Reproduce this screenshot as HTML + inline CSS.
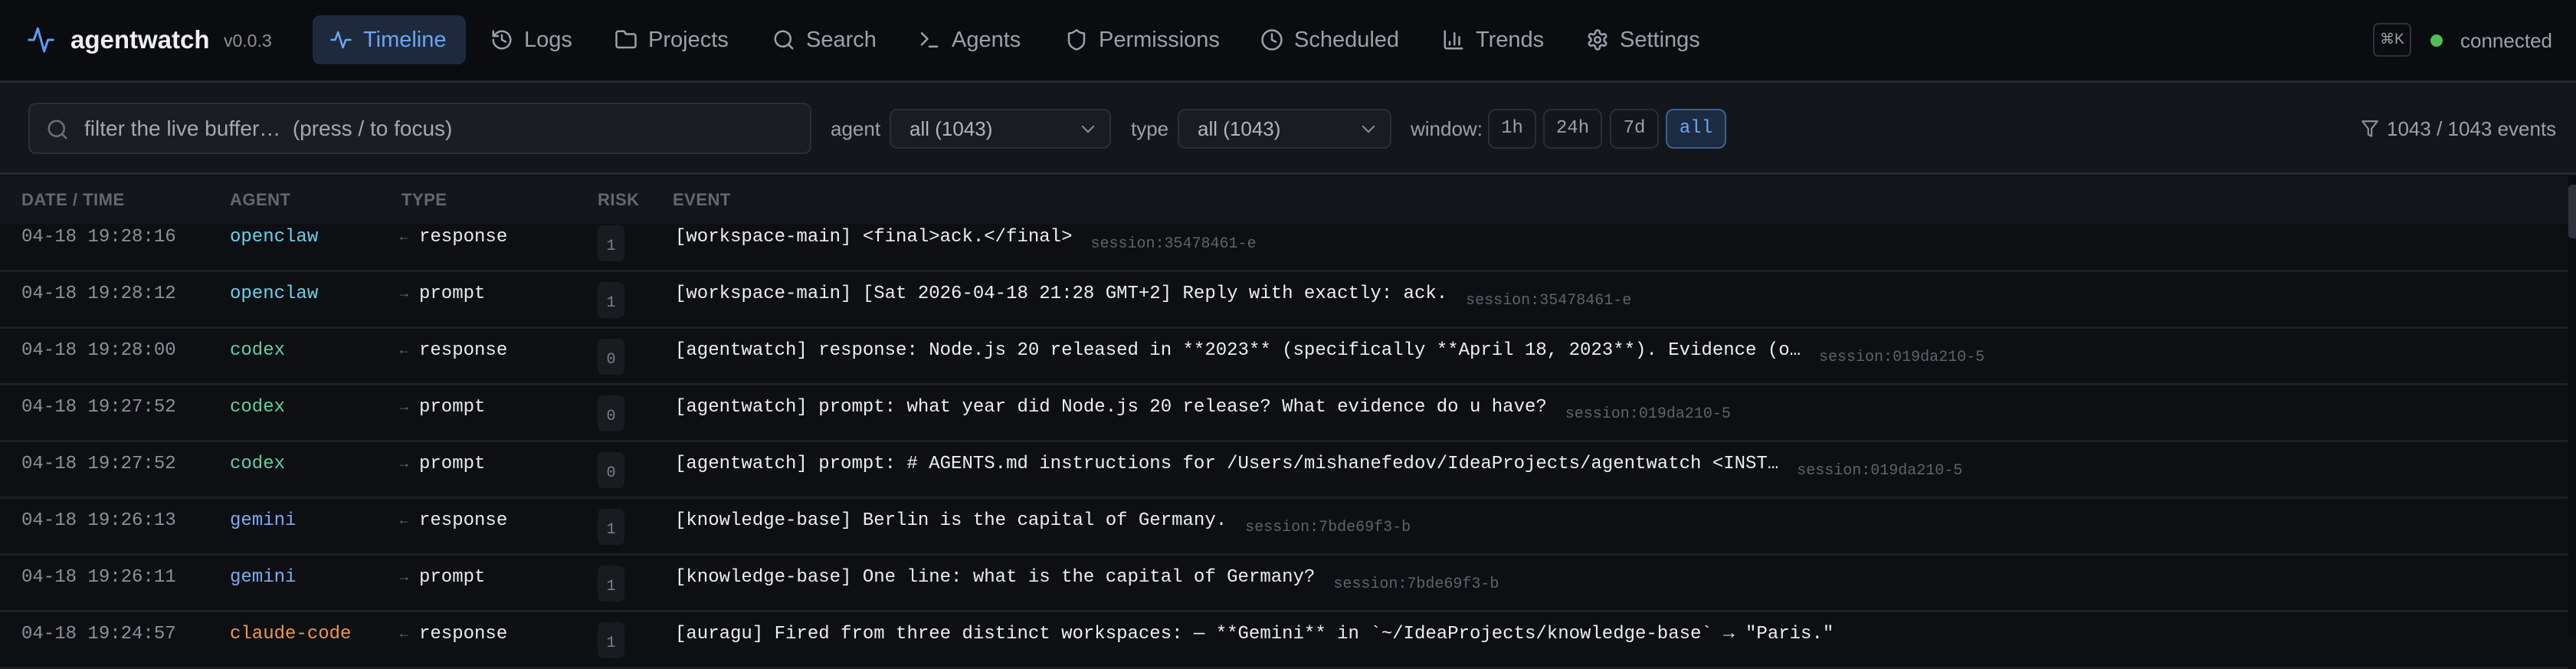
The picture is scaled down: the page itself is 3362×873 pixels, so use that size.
<!DOCTYPE html>
<html><head><meta charset="utf-8">
<style>
*{margin:0;padding:0;box-sizing:border-box}
html,body{width:3362px;height:828px;overflow:hidden;background:#0d0f12;font-family:"Liberation Sans",sans-serif}
.abs{position:absolute}
#nav{position:absolute;left:0;top:0;width:3362px;height:108px;background:#0b0c0f;border-bottom:3px solid #262a31}
.ni{position:absolute;top:20px;height:64px;display:flex;align-items:center;color:#9aa1ac;font-size:29px;white-space:nowrap}
.ni svg{width:30px;height:30px;margin-right:14px;fill:none;stroke:currentColor;stroke-width:2;stroke-linecap:round;stroke-linejoin:round}
#filt{position:absolute;left:0;top:108px;width:3362px;height:120px;background:#13161b;border-bottom:3px solid #262a31}
.sel{position:absolute;top:34px;height:52px;border:2px solid #2a2e36;border-radius:10px;background:#191c22;color:#b0b6c0;font-size:26px;line-height:48px;padding-left:24px}
.sel:after{content:"";position:absolute;right:22px;top:15px;width:10px;height:10px;border-right:2px solid #8a909a;border-bottom:2px solid #8a909a;transform:rotate(45deg)}
.lbl{position:absolute;top:34px;line-height:52px;color:#9aa1ac;font-size:26px}
.wb{position:absolute;top:34px;height:52px;border:2px solid #2a2e36;border-radius:10px;color:#9aa1ac;font-family:"Liberation Mono",monospace;font-size:24px;line-height:48px;text-align:center}
#th{position:absolute;left:0;top:230px;width:3352px;height:62px;background:#13161b;z-index:2}
#th div{position:absolute;top:0;line-height:62px;color:#626873;font-weight:bold;font-size:22px;letter-spacing:.5px}
.row{position:absolute;left:0;width:3352px;height:74px;border-bottom:3px solid #1c1f25;font-family:"Liberation Mono",monospace;font-size:24px;white-space:nowrap}
.row div{position:absolute;top:14px;line-height:30px}
.t{left:28px;color:#8b919b}
.a{left:300px}
.ar{left:522px;color:#6b717b;font-size:18px}
.ty{left:547px;color:#e8eaee}
.rk{left:780px;top:13px!important;width:35px;height:47px;background:#181b20;border-radius:7px;color:#7b818b;font-size:20px;text-align:center;line-height:56px!important}
.ev{left:881px;color:#eceef1}
.ev span{color:#5d636c;font-size:20px;margin-left:24px;position:relative;top:8px}
.oc{color:#67d3ea}.cx{color:#5fd1a0}.gm{color:#7ea9f4}.cc{color:#f0944c}
</style></head><body>
<div id="nav">
  <svg class="abs" style="left:36px;top:32px" width="40" height="40" viewBox="0 0 24 24" fill="none" stroke="#5b9cf2" stroke-width="1.8" stroke-linecap="round" stroke-linejoin="round"><path d="M1 12h4l3-9 5 18 3-9h4"/></svg>
  <div class="abs" style="left:92px;top:30px;font-size:33px;font-weight:bold;color:#eef0f4;line-height:44px">agentwatch</div>
  <div class="abs" style="left:292px;top:36px;font-size:23px;color:#8b919b;line-height:34px">v0.0.3</div>
  <div class="abs" style="left:408px;top:20px;width:200px;height:64px;background:#1e2a3c;border-radius:10px"></div>
  <div class="ni" style="left:430px;color:#6aa5f5"><svg viewBox="0 0 24 24"><path d="M2 12h4l3-8 5 16 3-8h5"/></svg>Timeline</div>
  <div class="ni" style="left:640px"><svg viewBox="0 0 24 24"><path d="M3 12a9 9 0 1 0 3-6.7L3 8"/><path d="M3 3v5h5"/><path d="M12 7v5l4 2"/></svg>Logs</div>
  <div class="ni" style="left:802px"><svg viewBox="0 0 24 24"><path d="M20 20a2 2 0 0 0 2-2V8a2 2 0 0 0-2-2h-8l-2-3H4a2 2 0 0 0-2 2v13a2 2 0 0 0 2 2z"/></svg>Projects</div>
  <div class="ni" style="left:1008px"><svg viewBox="0 0 24 24"><circle cx="11" cy="11" r="8"/><path d="m21 21-4.3-4.3"/></svg>Search</div>
  <div class="ni" style="left:1198px"><svg viewBox="0 0 24 24"><path d="m4 17 6-6-6-6"/><path d="M12 19h8"/></svg>Agents</div>
  <div class="ni" style="left:1390px"><svg viewBox="0 0 24 24"><path d="M20 13c0 5-3.5 7.5-7.7 9a1 1 0 0 1-.6 0C7.5 20.5 4 18 4 13V6a1 1 0 0 1 1-1c2 0 4.5-1.2 6.2-2.7a1.2 1.2 0 0 1 1.6 0C14.5 3.8 17 5 19 5a1 1 0 0 1 1 1z"/></svg>Permissions</div>
  <div class="ni" style="left:1645px"><svg viewBox="0 0 24 24"><circle cx="12" cy="12" r="10"/><path d="M12 6v6l4 2"/></svg>Scheduled</div>
  <div class="ni" style="left:1882px"><svg viewBox="0 0 24 24"><path d="M3 3v16a2 2 0 0 0 2 2h16"/><path d="M18 17V9M13 17V5M8 17v-3"/></svg>Trends</div>
  <div class="ni" style="left:2070px"><svg viewBox="0 0 24 24"><path d="M12.2 2h-.4a2 2 0 0 0-2 2v.2a2 2 0 0 1-1 1.7l-.4.3a2 2 0 0 1-2 0l-.2-.1a2 2 0 0 0-2.7.7l-.2.4a2 2 0 0 0 .7 2.7l.2.1a2 2 0 0 1 1 1.7v.5a2 2 0 0 1-1 1.8l-.2.1a2 2 0 0 0-.7 2.7l.2.4a2 2 0 0 0 2.7.7l.2-.1a2 2 0 0 1 2 0l.4.3a2 2 0 0 1 1 1.7v.2a2 2 0 0 0 2 2h.4a2 2 0 0 0 2-2v-.2a2 2 0 0 1 1-1.7l.4-.3a2 2 0 0 1 2 0l.2.1a2 2 0 0 0 2.7-.7l.2-.4a2 2 0 0 0-.7-2.7l-.2-.1a2 2 0 0 1-1-1.8v-.5a2 2 0 0 1 1-1.7l.2-.1a2 2 0 0 0 .7-2.7l-.2-.4a2 2 0 0 0-2.7-.7l-.2.1a2 2 0 0 1-2 0l-.4-.3a2 2 0 0 1-1-1.7V4a2 2 0 0 0-2-2z"/><circle cx="12" cy="12" r="3"/></svg>Settings</div>
  <div class="abs" style="left:3097px;top:30px;width:50px;height:44px;border:2px solid #2e323a;border-radius:7px;color:#9aa1ac;font-size:19px;text-align:center;line-height:40px">⌘K</div>
  <div class="abs" style="left:3172px;top:45px;width:16px;height:16px;border-radius:50%;background:#4fbf55"></div>
  <div class="abs" style="left:3211px;top:34px;font-size:26px;color:#9aa1ac;line-height:38px">connected</div>
</div>
<div id="filt">
  <div class="abs" style="left:37px;top:26px;width:1022px;height:67px;border:2px solid #2a2e36;border-radius:10px;background:#1a1d23"></div>
  <svg class="abs" style="left:60px;top:46px" width="30" height="30" viewBox="0 0 24 24" fill="none" stroke="#6b717b" stroke-width="2" stroke-linecap="round"><circle cx="11" cy="11" r="8"/><path d="m21 21-4.3-4.3"/></svg>
  <div class="abs" style="left:110px;top:40px;font-size:28px;color:#a3a9b3;line-height:40px">filter the live buffer…&nbsp; (press / to focus)</div>
  <div class="lbl" style="left:1084px">agent</div>
  <div class="sel" style="left:1161px;width:289px">all (1043)</div>
  <div class="lbl" style="left:1476px">type</div>
  <div class="sel" style="left:1537px;width:279px">all (1043)</div>
  <div class="lbl" style="left:1841px">window:</div>
  <div class="wb" style="left:1942px;width:63px">1h</div>
  <div class="wb" style="left:2014px;width:77px">24h</div>
  <div class="wb" style="left:2101px;width:64px">7d</div>
  <div class="wb" style="left:2174px;width:79px;background:#1d2b42;border-color:#3d5f92;color:#6aa8f7">all</div>
  <svg class="abs" style="left:3080px;top:46px" width="26" height="28" viewBox="0 0 24 24" fill="none" stroke="#8b919b" stroke-width="2" stroke-linejoin="round"><path d="M3 3h18l-7 9v9l-4-2v-7z"/></svg>
  <div class="abs" style="left:3115px;top:40px;font-size:26px;color:#9aa1ac;line-height:40px">1043 / 1043 events</div>
</div>
<div id="th">
  <div style="left:28px">DATE / TIME</div><div style="left:300px">AGENT</div><div style="left:524px">TYPE</div><div style="left:780px">RISK</div><div style="left:878px">EVENT</div>
</div>
<div class="abs" style="left:3352px;top:230px;width:10px;height:598px;background:#0b0c0f"></div>
<div class="abs" style="left:3352px;top:241px;width:10px;height:70px;background:#2e323a;border-radius:5px 0 0 5px"></div>

<div class="row" style="top:281px"><div class="t">04-18 19:28:16</div><div class="a oc">openclaw</div><div class="ar">←</div><div class="ty">response</div><div class="rk">1</div><div class="ev">[workspace-main] &lt;final&gt;ack.&lt;/final&gt;<span>session:35478461-e</span></div></div>
<div class="row" style="top:355px"><div class="t">04-18 19:28:12</div><div class="a oc">openclaw</div><div class="ar">→</div><div class="ty">prompt</div><div class="rk">1</div><div class="ev">[workspace-main] [Sat 2026-04-18 21:28 GMT+2] Reply with exactly: ack.<span>session:35478461-e</span></div></div>
<div class="row" style="top:429px"><div class="t">04-18 19:28:00</div><div class="a cx">codex</div><div class="ar">←</div><div class="ty">response</div><div class="rk">0</div><div class="ev">[agentwatch] response: Node.js 20 released in **2023** (specifically **April 18, 2023**). Evidence (o…<span>session:019da210-5</span></div></div>
<div class="row" style="top:503px"><div class="t">04-18 19:27:52</div><div class="a cx">codex</div><div class="ar">→</div><div class="ty">prompt</div><div class="rk">0</div><div class="ev">[agentwatch] prompt: what year did Node.js 20 release? What evidence do u have?<span>session:019da210-5</span></div></div>
<div class="row" style="top:577px"><div class="t">04-18 19:27:52</div><div class="a cx">codex</div><div class="ar">→</div><div class="ty">prompt</div><div class="rk">0</div><div class="ev">[agentwatch] prompt: # AGENTS.md instructions for /Users/mishanefedov/IdeaProjects/agentwatch &lt;INST…<span>session:019da210-5</span></div></div>
<div class="row" style="top:651px"><div class="t">04-18 19:26:13</div><div class="a gm">gemini</div><div class="ar">←</div><div class="ty">response</div><div class="rk">1</div><div class="ev">[knowledge-base] Berlin is the capital of Germany.<span>session:7bde69f3-b</span></div></div>
<div class="row" style="top:725px"><div class="t">04-18 19:26:11</div><div class="a gm">gemini</div><div class="ar">→</div><div class="ty">prompt</div><div class="rk">1</div><div class="ev">[knowledge-base] One line: what is the capital of Germany?<span>session:7bde69f3-b</span></div></div>
<div class="row" style="top:799px"><div class="t">04-18 19:24:57</div><div class="a cc">claude-code</div><div class="ar">←</div><div class="ty">response</div><div class="rk">1</div><div class="ev">[auragu] Fired from three distinct workspaces: — **Gemini** in `~/IdeaProjects/knowledge-base` → "Paris."</div></div>
</body></html>
